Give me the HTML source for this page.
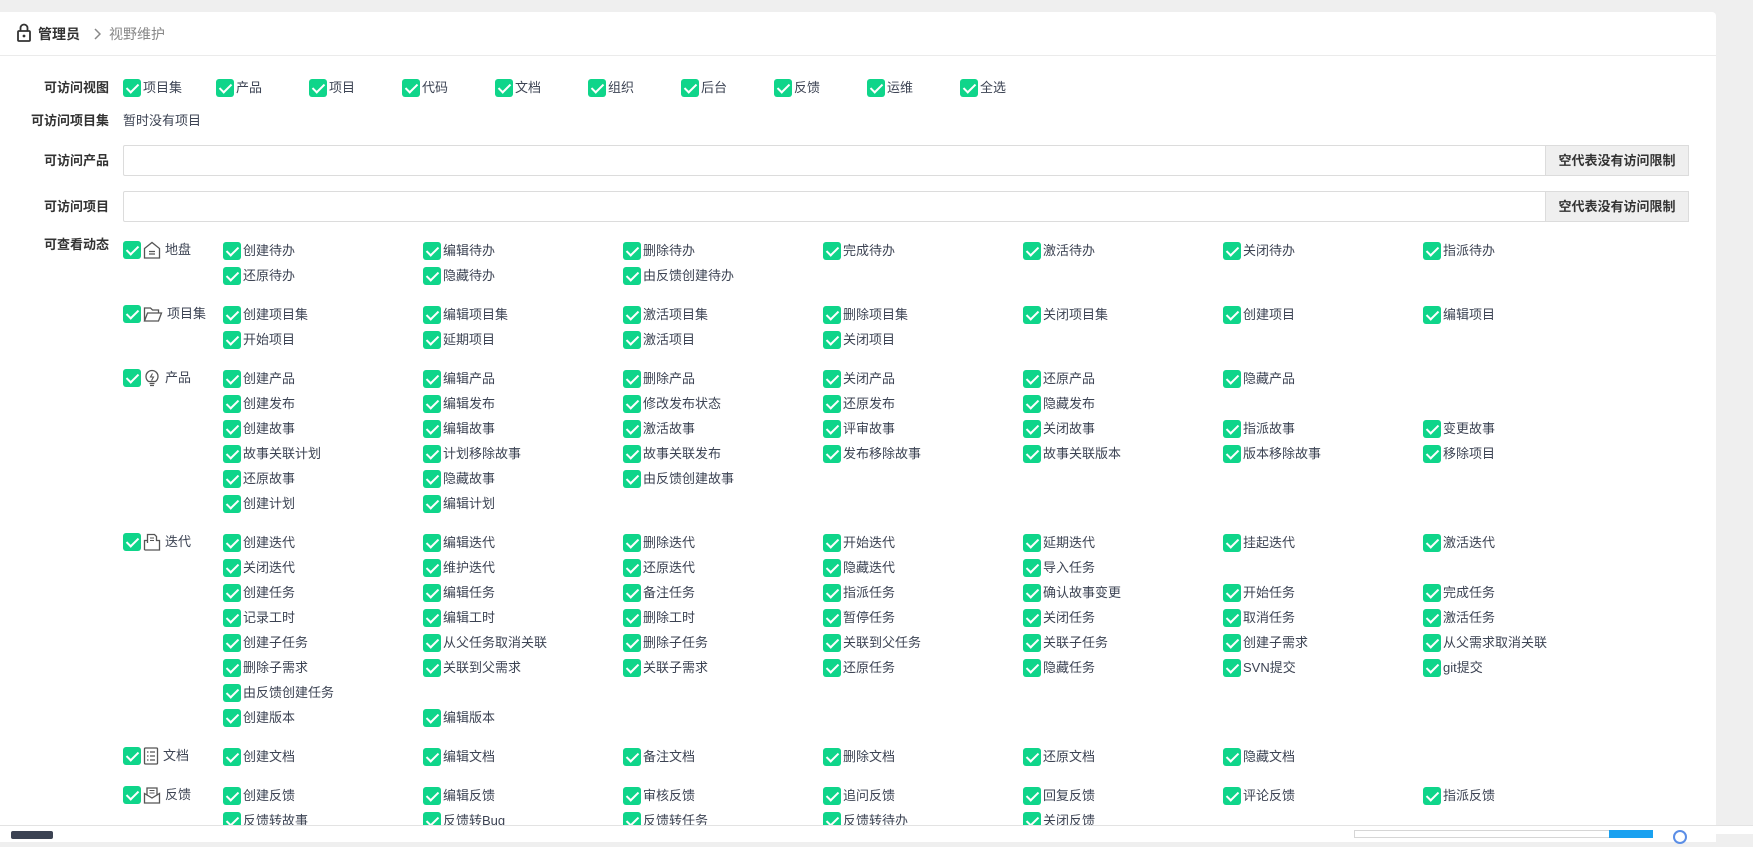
<!DOCTYPE html>
<html><head><meta charset="utf-8"><style>
*{margin:0;padding:0;box-sizing:border-box}
body{width:1753px;height:834px;overflow:hidden;background:#efefef;font-family:"Liberation Sans","Noto Sans CJK SC",sans-serif;font-size:13px;color:#3c4353;position:relative}
.card{position:absolute;left:0;top:12px;width:1716px;height:830px;background:#fff;border-radius:0 4px 0 0}
.hd{height:44px;border-bottom:1px solid #ebebeb;position:relative}
.a{position:absolute;white-space:nowrap}
.lbl{position:absolute;right:calc(1716px - 109px);font-weight:bold;color:#333;white-space:nowrap;line-height:18px}
.cb{display:inline-block;width:18px;height:18px;background:#0fd58a;border-radius:3px;vertical-align:top;position:relative;margin-right:2px}
.cb:after{content:"";position:absolute;left:6px;top:2px;width:5px;height:10px;border:solid #fff;border-width:0 2.5px 2.5px 0;transform:rotate(45deg)}
.it{display:inline-flex;align-items:center;line-height:18px;white-space:nowrap}
.inp{position:absolute;left:123px;width:1566px;height:31px;border:1px solid #dcdcdc;border-radius:2px}
.btn{position:absolute;right:-1px;top:-1px;width:144px;height:31px;background:#efefef;border:1px solid #dcdcdc;font-weight:bold;color:#333;text-align:center;line-height:29px}
.acts{position:absolute;left:223px;top:226px}
.g{margin-bottom:14px;position:relative}
.r{height:25px;display:flex}
.r .it{width:200px}
.gh{position:absolute;left:-100px;top:3px;display:flex;align-items:center;line-height:18px}
.gh svg{margin:0 4px 0 0}
</style></head><body>
<div class="card">
 <div class="hd">
  <svg class="a" style="left:17px;top:11px" width="14" height="19" viewBox="0 0 14 19"><path d="M3.5 8V5a3.5 3.5 0 0 1 7 0v3" fill="none" stroke="#333" stroke-width="1.8"/><rect x="1" y="8" width="12" height="10" rx="1" fill="none" stroke="#333" stroke-width="1.8"/><circle cx="7" cy="13" r="1.4" fill="#333"/></svg>
  <span class="a" style="left:38px;top:13px;font-size:14px;font-weight:bold;color:#333;line-height:18px">管理员</span>
  <svg class="a" style="left:93px;top:16px" width="8" height="12" viewBox="0 0 8 12"><path d="M2 1l5 5-5 5" fill="none" stroke="#888" stroke-width="1.5"/></svg>
  <span class="a" style="left:109px;top:13px;font-size:14px;color:#888;line-height:18px">视野维护</span>
 </div>
 <div class="lbl" style="top:67px">可访问视图</div>
 <div class="a" style="left:123px;top:67px">
  <span class="it a" style="left:0"><i class="cb"></i>项目集</span>
  <span class="it a" style="left:93px"><i class="cb"></i>产品</span>
  <span class="it a" style="left:186px"><i class="cb"></i>项目</span>
  <span class="it a" style="left:279px"><i class="cb"></i>代码</span>
  <span class="it a" style="left:372px"><i class="cb"></i>文档</span>
  <span class="it a" style="left:465px"><i class="cb"></i>组织</span>
  <span class="it a" style="left:558px"><i class="cb"></i>后台</span>
  <span class="it a" style="left:651px"><i class="cb"></i>反馈</span>
  <span class="it a" style="left:744px"><i class="cb"></i>运维</span>
  <span class="it a" style="left:837px"><i class="cb"></i>全选</span>
 </div>
 <div class="lbl" style="top:100px">可访问项目集</div>
 <div class="a" style="left:123px;top:100px;line-height:18px">暂时没有项目</div>
 <div class="lbl" style="top:140px">可访问产品</div>
 <div class="inp" style="top:133px"><div class="btn">空代表没有访问限制</div></div>
 <div class="lbl" style="top:186px">可访问项目</div>
 <div class="inp" style="top:179px"><div class="btn">空代表没有访问限制</div></div>
 <div class="lbl" style="top:224px">可查看动态</div>
 <div class="acts">
  <div class="g"><div class="gh"><i class="cb"></i><svg width="18" height="18" viewBox="0 0 18 18"><path d="M1.5 7.5L9 1.5l7.5 6V17h-15z" fill="none" stroke="#555" stroke-width="1.3"/><path d="M6 10.5h6M6 13h6" stroke="#555" stroke-width="1.2"/></svg>地盘</div>
   <div class="r"><span class="it"><i class="cb"></i>创建待办</span><span class="it"><i class="cb"></i>编辑待办</span><span class="it"><i class="cb"></i>删除待办</span><span class="it"><i class="cb"></i>完成待办</span><span class="it"><i class="cb"></i>激活待办</span><span class="it"><i class="cb"></i>关闭待办</span><span class="it"><i class="cb"></i>指派待办</span></div>
   <div class="r"><span class="it"><i class="cb"></i>还原待办</span><span class="it"><i class="cb"></i>隐藏待办</span><span class="it"><i class="cb"></i>由反馈创建待办</span></div>
  </div>
  <div class="g"><div class="gh"><i class="cb"></i><svg width="20" height="18" viewBox="0 0 20 18"><path d="M1.5 16V3h6l2 2h6v3M1.5 16l3-8h14l-3 8z" fill="none" stroke="#555" stroke-width="1.3"/></svg>项目集</div>
   <div class="r"><span class="it"><i class="cb"></i>创建项目集</span><span class="it"><i class="cb"></i>编辑项目集</span><span class="it"><i class="cb"></i>激活项目集</span><span class="it"><i class="cb"></i>删除项目集</span><span class="it"><i class="cb"></i>关闭项目集</span><span class="it"><i class="cb"></i>创建项目</span><span class="it"><i class="cb"></i>编辑项目</span></div>
   <div class="r"><span class="it"><i class="cb"></i>开始项目</span><span class="it"><i class="cb"></i>延期项目</span><span class="it"><i class="cb"></i>激活项目</span><span class="it"><i class="cb"></i>关闭项目</span></div>
  </div>
  <div class="g"><div class="gh"><i class="cb"></i><svg width="18" height="18" viewBox="0 0 18 18"><path d="M5.5 12.5C3.5 11 3 9.5 3 7.5a6 6 0 0 1 12 0c0 2-.5 3.5-2.5 5z M6.5 14.5h5M7 16.5h4" fill="none" stroke="#555" stroke-width="1.3"/><path d="M9.5 4.5L7.5 8h3l-2 3.5" fill="none" stroke="#555" stroke-width="1.1"/></svg> 产品</div>
   <div class="r"><span class="it"><i class="cb"></i>创建产品</span><span class="it"><i class="cb"></i>编辑产品</span><span class="it"><i class="cb"></i>删除产品</span><span class="it"><i class="cb"></i>关闭产品</span><span class="it"><i class="cb"></i>还原产品</span><span class="it"><i class="cb"></i>隐藏产品</span></div>
   <div class="r"><span class="it"><i class="cb"></i>创建发布</span><span class="it"><i class="cb"></i>编辑发布</span><span class="it"><i class="cb"></i>修改发布状态</span><span class="it"><i class="cb"></i>还原发布</span><span class="it"><i class="cb"></i>隐藏发布</span></div>
   <div class="r"><span class="it"><i class="cb"></i>创建故事</span><span class="it"><i class="cb"></i>编辑故事</span><span class="it"><i class="cb"></i>激活故事</span><span class="it"><i class="cb"></i>评审故事</span><span class="it"><i class="cb"></i>关闭故事</span><span class="it"><i class="cb"></i>指派故事</span><span class="it"><i class="cb"></i>变更故事</span></div>
   <div class="r"><span class="it"><i class="cb"></i>故事关联计划</span><span class="it"><i class="cb"></i>计划移除故事</span><span class="it"><i class="cb"></i>故事关联发布</span><span class="it"><i class="cb"></i>发布移除故事</span><span class="it"><i class="cb"></i>故事关联版本</span><span class="it"><i class="cb"></i>版本移除故事</span><span class="it"><i class="cb"></i>移除项目</span></div>
   <div class="r"><span class="it"><i class="cb"></i>还原故事</span><span class="it"><i class="cb"></i>隐藏故事</span><span class="it"><i class="cb"></i>由反馈创建故事</span></div>
   <div class="r"><span class="it"><i class="cb"></i>创建计划</span><span class="it"><i class="cb"></i>编辑计划</span></div>
  </div>
  <div class="g"><div class="gh"><i class="cb"></i><svg width="18" height="18" viewBox="0 0 18 18"><path d="M1.5 17V7.5h3M4.5 10V1.5h7l2 2V7.5h3V17h-15" fill="none" stroke="#555" stroke-width="1.3"/><path d="M7 5h4M7 7.5h4" stroke="#555" stroke-width="1.1"/></svg>迭代</div>
   <div class="r"><span class="it"><i class="cb"></i>创建迭代</span><span class="it"><i class="cb"></i>编辑迭代</span><span class="it"><i class="cb"></i>删除迭代</span><span class="it"><i class="cb"></i>开始迭代</span><span class="it"><i class="cb"></i>延期迭代</span><span class="it"><i class="cb"></i>挂起迭代</span><span class="it"><i class="cb"></i>激活迭代</span></div>
   <div class="r"><span class="it"><i class="cb"></i>关闭迭代</span><span class="it"><i class="cb"></i>维护迭代</span><span class="it"><i class="cb"></i>还原迭代</span><span class="it"><i class="cb"></i>隐藏迭代</span><span class="it"><i class="cb"></i>导入任务</span></div>
   <div class="r"><span class="it"><i class="cb"></i>创建任务</span><span class="it"><i class="cb"></i>编辑任务</span><span class="it"><i class="cb"></i>备注任务</span><span class="it"><i class="cb"></i>指派任务</span><span class="it"><i class="cb"></i>确认故事变更</span><span class="it"><i class="cb"></i>开始任务</span><span class="it"><i class="cb"></i>完成任务</span></div>
   <div class="r"><span class="it"><i class="cb"></i>记录工时</span><span class="it"><i class="cb"></i>编辑工时</span><span class="it"><i class="cb"></i>删除工时</span><span class="it"><i class="cb"></i>暂停任务</span><span class="it"><i class="cb"></i>关闭任务</span><span class="it"><i class="cb"></i>取消任务</span><span class="it"><i class="cb"></i>激活任务</span></div>
   <div class="r"><span class="it"><i class="cb"></i>创建子任务</span><span class="it"><i class="cb"></i>从父任务取消关联</span><span class="it"><i class="cb"></i>删除子任务</span><span class="it"><i class="cb"></i>关联到父任务</span><span class="it"><i class="cb"></i>关联子任务</span><span class="it"><i class="cb"></i>创建子需求</span><span class="it"><i class="cb"></i>从父需求取消关联</span></div>
   <div class="r"><span class="it"><i class="cb"></i>删除子需求</span><span class="it"><i class="cb"></i>关联到父需求</span><span class="it"><i class="cb"></i>关联子需求</span><span class="it"><i class="cb"></i>还原任务</span><span class="it"><i class="cb"></i>隐藏任务</span><span class="it"><i class="cb"></i>SVN提交</span><span class="it"><i class="cb"></i>git提交</span></div>
   <div class="r"><span class="it"><i class="cb"></i>由反馈创建任务</span></div>
   <div class="r"><span class="it"><i class="cb"></i>创建版本</span><span class="it"><i class="cb"></i>编辑版本</span></div>
  </div>
  <div class="g"><div class="gh"><i class="cb"></i><svg width="16" height="18" viewBox="0 0 16 18"><rect x="1.5" y="1" width="13" height="16" rx="1" fill="none" stroke="#555" stroke-width="1.3"/><path d="M4 5h1.5M7 5h5M4 9h1.5M7 9h5M4 13h1.5M7 13h5" stroke="#555" stroke-width="1.2"/></svg>文档</div>
   <div class="r"><span class="it"><i class="cb"></i>创建文档</span><span class="it"><i class="cb"></i>编辑文档</span><span class="it"><i class="cb"></i>备注文档</span><span class="it"><i class="cb"></i>删除文档</span><span class="it"><i class="cb"></i>还原文档</span><span class="it"><i class="cb"></i>隐藏文档</span></div>
  </div>
  <div class="g"><div class="gh"><i class="cb"></i><svg width="18" height="18" viewBox="0 0 18 18"><path d="M1.5 7.5L9 12l7.5-4.5V17h-15zM4 9V2h10v7" fill="none" stroke="#555" stroke-width="1.3"/><path d="M6.5 4.5h5M6.5 7h5" stroke="#555" stroke-width="1.1"/></svg>反馈</div>
   <div class="r"><span class="it"><i class="cb"></i>创建反馈</span><span class="it"><i class="cb"></i>编辑反馈</span><span class="it"><i class="cb"></i>审核反馈</span><span class="it"><i class="cb"></i>追问反馈</span><span class="it"><i class="cb"></i>回复反馈</span><span class="it"><i class="cb"></i>评论反馈</span><span class="it"><i class="cb"></i>指派反馈</span></div>
   <div class="r"><span class="it"><i class="cb"></i>反馈转故事</span><span class="it"><i class="cb"></i>反馈转Bug</span><span class="it"><i class="cb"></i>反馈转任务</span><span class="it"><i class="cb"></i>反馈转待办</span><span class="it"><i class="cb"></i>关闭反馈</span></div>
  </div>
 </div>
</div>
<div style="position:absolute;left:0;top:825px;width:1753px;height:9px;background:#fff;border-top:1px solid #e3e3e3">
 <div class="a" style="left:11px;top:5px;width:42px;height:8px;background:#3c4353;border-radius:2px"></div>
 <div class="a" style="left:1354px;top:4px;width:256px;height:8px;border:1px solid #d6d6d6"></div>
 <div class="a" style="left:1609px;top:4px;width:44px;height:8px;background:#1aa1f0"></div>
 <div class="a" style="left:1673px;top:4px;width:14px;height:14px;border:2px solid #5b8ee6;border-radius:50%"></div>
</div>
</body></html>
